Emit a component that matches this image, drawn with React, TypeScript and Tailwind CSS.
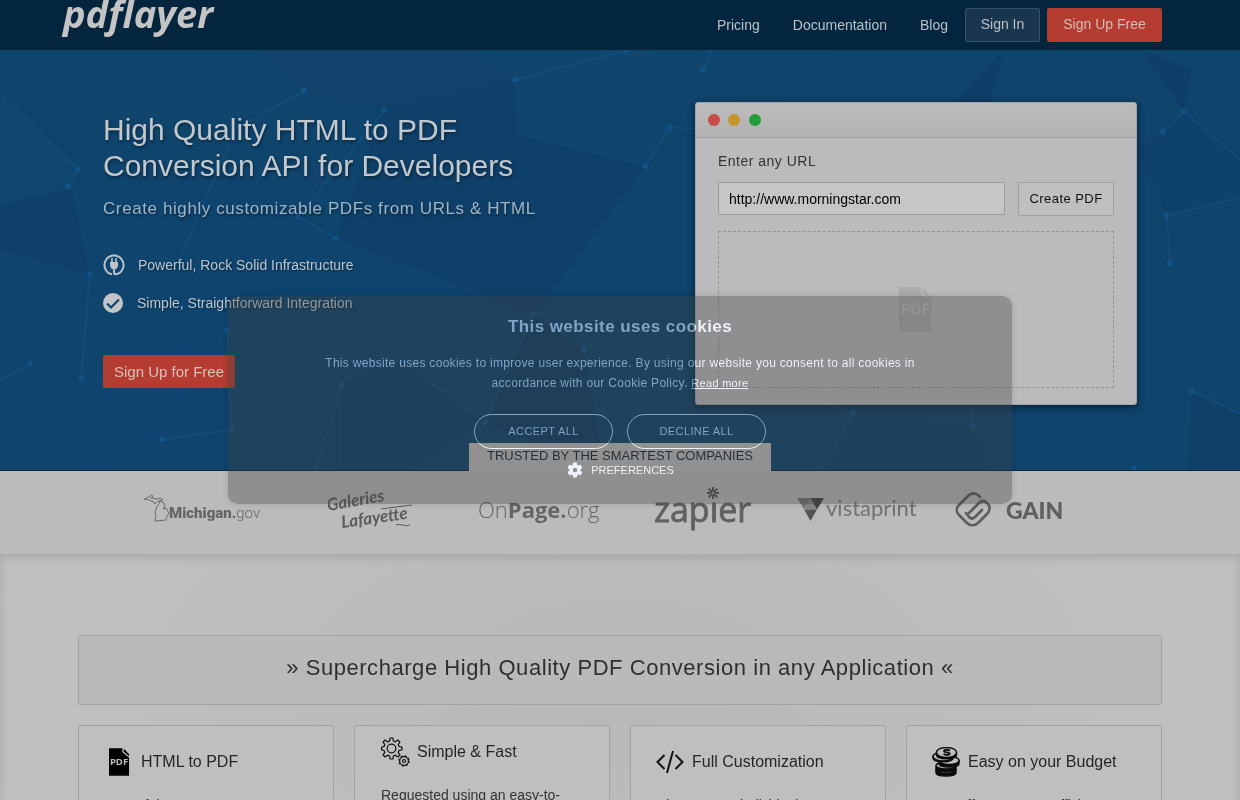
import React from "react";

const facets = [
  { points: "0,0 260,0 230,100 0,44", fill: "#11486f" },
  { points: "0,44 78,120 68,137 0,156", fill: "#114a74" },
  { points: "0,156 72,140 90,225 0,200", fill: "#0f3f68" },
  { points: "90,225 72,140 240,120 336,189 227,281", fill: "#0e4570" },
  { points: "260,0 460,0 515,30 384,61 304,41", fill: "#12426a" },
  { points: "384,61 515,30 518,86 645,117 535,265 336,189", fill: "#0f3e67" },
  { points: "515,30 626,1 695,0 670,78 645,117 518,86", fill: "#11476f" },
  { points: "336,189 535,265 402,312 227,281", fill: "#0f456f" },
  { points: "0,200 90,225 81,329 0,331", fill: "#0f446f" },
  { points: "81,329 227,281 162,390 90,421 85,421", fill: "#104672" },
  { points: "0,350 34,345 36,421 0,421", fill: "#11466e" },
  { points: "342,335 402,312 485,373 400,421 342,421", fill: "#10406a" },
  { points: "533,265 584,300 605,421 485,373", fill: "#0e3d66" },
  { points: "720,0 830,0 790,52 740,60", fill: "#12476d" },
  { points: "1005,0 990,52 955,52", fill: "#0e3c66" },
  { points: "1140,0 1192,20 1184,62", fill: "#0e3d66" },
  { points: "1184,62 1240,100 1240,148 1167,166 1137,100", fill: "#0f416a" },
  { points: "1167,166 1240,148 1240,240 1192,342 1170,214", fill: "#0f456f" },
  { points: "1192,342 1240,364 1240,421 1187,421", fill: "#123f66" },
  { points: "853,363 973,377 990,421 830,421", fill: "#10416b" },
];

const links = [
  "0,44 78,120 68,137",
  "304,41 235,80 180,210",
  "384,61 298,167 336,189",
  "90,225 81,329",
  "0,331 30,314",
  "227,281 232,380 162,390",
  "342,335 315,421",
  "515,30 626,1",
  "712,0 703,20",
  "695,79 670,78 645,117",
  "533,265 485,373 402,312",
  "605,362 584,300",
  "1163,82 1184,62 1240,110",
  "1240,148 1167,166 1170,214",
  "1192,342 1240,364",
  "820,421 853,363 830,355",
  "973,377 971,355",
];

const nodes = [
  [78, 120], [68, 137], [304, 41], [384, 61], [298, 167], [336, 189], [90, 225], [81, 329],
  [30, 314], [227, 281], [232, 380], [162, 390], [342, 335], [515, 30], [626, 1], [703, 20],
  [670, 78], [645, 117], [533, 265], [485, 373], [402, 312], [584, 300], [1163, 82], [1184, 62],
  [1167, 166], [1170, 214], [1192, 342], [853, 363], [973, 377], [1134, 419],
];

const HeroBackground = () => (
  <svg
    className="absolute inset-0 h-full w-full"
    viewBox="0 0 1240 421"
    preserveAspectRatio="xMidYMid slice"
    aria-hidden="true"
  >
    <g opacity="0.6">
      {facets.map((f) => (
        <polygon key={f.points} points={f.points} fill={f.fill} />
      ))}
    </g>
    <g opacity="0.8">
      {links.map((l) => (
        <polyline key={l} points={l} fill="none" stroke="#17517f" strokeWidth="1.5" />
      ))}
      {nodes.map(([x, y]) => (
        <circle key={`${x}-${y}`} cx={x} cy={y} r="3" fill="#15568b" />
      ))}
    </g>
  </svg>
);

const PdfIcon = ({ className }: { className: string }) => (
  <svg viewBox="0 0 22 29" className={className} aria-hidden="true">
    <path d="M0 0h14v4l7 6v19H0z" fill="currentColor" />
    <path d="M16 1l5 5.500v2L15 3z" fill="currentColor" />
    <text
      x="10.500"
      y="18"
      textAnchor="middle"
      fontFamily="Open Sans, sans-serif"
      fontWeight="700"
      fontSize="10"
      fill="#bebebe"
    >
      PDF
    </text>
  </svg>
);

const GearsIcon = () => (
  <svg viewBox="0 0 29 30" className="h-[30px] w-[29px]" fill="none" stroke="#111" strokeWidth="1.200" aria-hidden="true">
    <path d="M9.200 1h2.600l.7 3 1.900.8 2.600-1.700 1.900 1.900-1.700 2.600.8 1.900 3 .7v2.600l-3 .7-.8 1.900 1.700 2.600-1.900 1.900-2.600-1.700-1.900.8-.7 3H9.200l-.7-3-1.900-.8L4 19.900 2.100 18l1.700-2.600L3 13.500l-2.400-.7v-2.600L3 9.500l.8-1.900L2.100 5 4 3.100l2.600 1.700L8.500 4z" />
    <circle cx="10.500" cy="11.500" r="4.300" />
    <circle cx="23" cy="24" r="4.400" />
    <circle cx="23" cy="24" r="5.100" strokeDasharray="2 2.005" />
    <circle cx="23" cy="24" r="1.500" />
  </svg>
);

const CodeIcon = () => (
  <svg viewBox="0 0 28 24" className="h-6 w-7" fill="none" stroke="#111" strokeWidth="2" aria-hidden="true">
    <path d="M8.500 5L1.500 12l7 7M19.500 5l7 7-7 7M17 1l-6 22" />
  </svg>
);

const CoinsIcon = () => (
  <svg viewBox="0 0 28 30" className="h-[30px] w-7" fill="#bebebe" stroke="#0c0c0c" strokeWidth="1.400" aria-hidden="true">
    <path d="M4 23v3c0 4 20 4 20 0v-3" fill="#0c0c0c" />
    <ellipse cx="14" cy="23" rx="10" ry="3.500" />
    <path d="M4 19v3c0 4 20 4 20 0v-3" fill="#0c0c0c" />
    <ellipse cx="14" cy="18.500" rx="10" ry="3.500" />
    <path d="M7 14v3c0 4 20 4 20 0v-4" fill="#0c0c0c" />
    <ellipse cx="17" cy="13.500" rx="10" ry="4" />
    <path d="M1 9v2c0 5 20 5 20 0V9" fill="#0c0c0c" />
    <ellipse cx="11" cy="9.500" rx="10" ry="4.500" />
    <path d="M4.500 5v3c0 5 20 5 20 0V5" fill="#0c0c0c" />
    <ellipse cx="14.500" cy="5.500" rx="10" ry="5" />
    <path d="M18 3.500c-3-1.500-6.500-.5-6 .8.400 1.300 5.500.7 5.700 2.200.1 1.300-3.500 2-6.200.5" fill="none" strokeWidth="1.800" />
  </svg>
);

const PlugIcon = () => (
  <svg viewBox="0 0 22 22" className="h-[22px] w-[22px]" fill="none" stroke="#bcc3c9" strokeWidth="2" aria-hidden="true">
    <path d="M9 20.300A9.500 9.500 0 1 1 13 20.300c-2 .3-2-1-2-5" />
    <path d="M7 8h8v3c0 3-2 4.500-4 4.500S7 14 7 11z" fill="#bcc3c9" stroke="none" />
    <path d="M9 4v4M13 4v4" strokeWidth="1.600" />
  </svg>
);

const CheckIcon = () => (
  <svg viewBox="0 0 20 20" className="h-5 w-5" aria-hidden="true">
    <circle cx="10" cy="10" r="10" fill="#c3c6c8" />
    <path d="M4 10.500l4 4 8-8" fill="none" stroke="#0f446f" strokeWidth="2.200" />
  </svg>
);

const MichiganLogo = () => (
  <svg viewBox="0 0 118 30" className="h-[30px] w-[118px]" role="img" aria-label="Michigan.gov">
    <path
      d="M1 5l5-2 3-2 1 2-2 1 6 1 4-1 2 2-5 1-3 3-1-2-5-2zM12 27l1-4-1-5 2-6 2-2 1-3 4 2 1 3-2 3 3-1 3 5-2 3-1 4z"
      fill="none"
      stroke="#6c6c6c"
    />
    <text x="26" y="24" fontFamily="Roboto, sans-serif" fontSize="15" fill="#666">
      <tspan fontWeight="900">Michigan.</tspan>
      <tspan fontWeight="300">gov</tspan>
    </text>
  </svg>
);

const GaleriesLogo = () => (
  <svg viewBox="0 0 84 46" className="h-[46px] w-[84px]" role="img" aria-label="Galeries Lafayette" fill="#5c5c5c">
    <g fontFamily="Lato, sans-serif" fontStyle="italic" fontWeight="700">
      <text x="0" y="25" fontSize="17" transform="rotate(-10 0 25)">Galeries</text>
      <text x="14" y="42" fontSize="17" transform="rotate(-8 14 42)">Lafayette</text>
    </g>
    <path d="M53 23l31-4M68 39c6-2 6 2 14 0" fill="none" stroke="#5c5c5c" />
  </svg>
);

const OnPageLogo = () => (
  <svg viewBox="0 0 124 30" className="h-[30px] w-[124px]" role="img" aria-label="OnPage.org">
    <text x="0" y="21" fontFamily="Open Sans, sans-serif" fontSize="22" fill="#666">
      <tspan fontWeight="300">On</tspan>
      <tspan fontWeight="700">Page.</tspan>
      <tspan fontWeight="300">org</tspan>
    </text>
  </svg>
);

const ZapierLogo = () => (
  <svg viewBox="0 0 98 46" className="h-[46px] w-[98px]" role="img" aria-label="zapier">
    <text
      x="0"
      y="36"
      fontFamily="Open Sans, sans-serif"
      fontSize="34"
      fill="#606060"
      stroke="#606060"
      strokeWidth="0.800"
    >
      zapıer
    </text>
    <path
      d="M59 1v12M53 7h12M54.700 2.700l8.600 8.600M63.300 2.700l-8.600 8.600"
      stroke="#555"
      strokeWidth="2"
    />
    <circle cx="59" cy="7" r="1.600" fill="#949494" />
  </svg>
);

const VistaprintLogo = () => (
  <svg viewBox="0 0 122 28" className="h-7 w-[122px]" role="img" aria-label="vistaprint">
    <path d="M1 2h14L8 13z" fill="#747474" />
    <path d="M14.500 2L21 13.500H8z" fill="#858585" />
    <path d="M14.500 2H28l-7 11.500z" fill="#444" />
    <path d="M8 13.500h13L14.500 25z" fill="#555" />
    <text x="30" y="20" fontFamily="Lato, sans-serif" fontSize="22" fill="#717171">
      vistaprint
    </text>
  </svg>
);

const GainLogo = () => (
  <svg viewBox="0 0 112 36" className="h-9 w-28" role="img" aria-label="GAIN">
    <g fill="none" stroke="#5d5d5d" strokeWidth="2.600" strokeLinecap="round">
      <path d="M25 5l-2-2c-3-2-7-2-10 1L4 13c-3 3-3 7 0 10l8 8c3 3 8 3 11 0l9-9c3-3 4-8 0-11-3-3-6-2-8 0L14 21" />
      <path d="M11 21l3 4c2 2 4 2 6 0l7-7" />
    </g>
    <text x="51" y="27" fontFamily="Lato, sans-serif" fontWeight="900" fontSize="23" fill="#5f5f5f">
      GAIN
    </text>
  </svg>
);

const Header = () => (
  <header className="bg-[#03263e]">
    <div className="mx-auto flex h-[50px] max-w-[1084px] items-start justify-between">
      <a
        href="#"
        className="-mt-3 -ml-[15px] font-['Open_Sans',sans-serif] text-[38px] leading-[50px] font-bold text-[#c4c4c4] italic"
      >
        pdflayer
      </a>
      <nav className="flex items-center pt-2 text-sm text-[#bac2c8]">
        <a href="#" className="mr-[33px] pb-px">Pricing</a>
        <a href="#" className="mr-[33px] pb-px">Documentation</a>
        <a href="#" className="mr-[17px]">Blog</a>
        <button className="mr-[7px] h-[34px] w-[75px] rounded-[2px] border border-[#34526a] bg-[#1a364e] pb-[2px]">
          Sign In
        </button>
        <button className="h-[34px] w-[115px] rounded-[2px] bg-[#b43c30] pb-[2px] text-[#d6bcb8]">Sign Up Free</button>
      </nav>
    </div>
  </header>
);

const Hero = () => (
  <section className="relative border-b border-[#0b263d] bg-[#0f446d]">
    <HeroBackground />
    <div className="relative mx-auto flex max-w-[1034px] items-start justify-between pt-[52px] pb-[65px]">
      <div className="pt-[10px] text-[#bcc6ce]">
        <h1 className="text-[30px] leading-9 text-[#c3c8cc] [text-shadow:1px_2px_3px_rgba(0,0,0,0.4)]">
          High Quality HTML to PDF
          <br />
          Conversion API for Developers
        </h1>
        <p className="mt-[13px] text-[17px] leading-6 tracking-[0.035em] text-[#9fb4c4] [text-shadow:1px_2px_3px_rgba(0,0,0,0.4)]">
          Create highly customizable PDFs from URLs &amp; HTML
        </p>
        <ul className="mt-[33px] text-sm [text-shadow:1px_1px_2px_rgba(0,0,0,0.4)]">
          <li className="flex h-[22px] items-center gap-[13px]">
            <PlugIcon />
            Powerful, Rock Solid Infrastructure
          </li>
          <li className="mt-4 flex h-[22px] items-center gap-[14px]">
            <CheckIcon />
            Simple, Straightforward Integration
          </li>
        </ul>
        <button className="mt-[41px] h-[33px] rounded-[2px] bg-[#b43c30] px-[11px] pt-px text-[15px] text-[#d8c0bc]">
          Sign Up for Free
        </button>
      </div>

      <div className="h-[303px] w-[442px] rounded-[3px] border border-[#a4a4a8] bg-[#bbbbbe] shadow-[0_2px_8px_rgba(0,0,0,0.5)]">
        <div className="flex h-[35px] items-center gap-2 rounded-t-[3px] border-b border-[#a2a2a2] bg-linear-to-b from-[#bcbcbc] to-[#b2b2b2] px-3">
          <span className="h-3 w-3 rounded-full bg-[#c94b47]" />
          <span className="h-3 w-3 rounded-full bg-[#c79427]" />
          <span className="ml-px h-3 w-3 rounded-full bg-[#219c37]" />
        </div>
        <form className="px-[22px] pt-[13px]" onSubmit={(e) => e.preventDefault()}>
          <label htmlFor="url" className="block text-sm leading-5 tracking-[0.035em] text-[#333]">
            Enter any URL
          </label>
          <div className="mt-[11px] flex justify-between">
            <input
              id="url"
              type="text"
              defaultValue="http://www.morningstar.com"
              className="h-[33px] w-[287px] rounded-[2px] border border-[#9c9c9c] bg-[#c6c6c6] px-[10px] text-sm text-black"
            />
            <button className="h-[34px] w-24 rounded-[2px] border border-[#a0a0a0] bg-[#bfbfc1] text-[13px] tracking-[0.035em] whitespace-nowrap text-[#111]">
              Create PDF
            </button>
          </div>
          <div className="mt-[15px] flex h-[157px] items-center justify-center border border-dashed border-[#939393]">
            <PdfIcon className="h-[45px] w-[34px] text-[#acacac]" />
          </div>
        </form>
      </div>
    </div>
  </section>
);

const Companies = () => (
  <section className="relative border-b border-[#adadad] bg-[#bbbbbb]">
    <h2 className="absolute -top-7 left-1/2 h-7 w-[302px] -translate-x-1/2 bg-[#bdbdbd] pt-[2px] text-center text-[13px] leading-[21px] text-[#152636]">
      TRUSTED BY THE SMARTEST COMPANIES
    </h2>
    <div className="mx-auto grid h-[83px] max-w-[1084px] grid-cols-[168fr_168fr_171fr_155fr_154fr_153fr] justify-items-center pt-[15px] pr-[75px] pl-10">
      <div className="pt-2"><MichiganLogo /></div>
      <div><GaleriesLogo /></div>
      <div className="pt-[11px]"><OnPageLogo /></div>
      <div><ZapierLogo /></div>
      <div className="pt-[10px]"><VistaprintLogo /></div>
      <div className="pt-[6px]"><GainLogo /></div>
    </div>
  </section>
);

const Features = () => (
  <section className="bg-radial-[at_50%_30%] from-[#b8b8b8] to-[#c4c4c4] pt-20 shadow-[inset_0_2px_10px_rgba(0,0,0,0.15)]">
    <div className="mx-auto max-w-[1084px]">
      <h2 className="flex h-[70px] items-center justify-center rounded-[2px] border border-[#a3a3a3] bg-[#b9b9b9] pb-[5px] text-[22px] tracking-wide text-[#2f2f2f]">
        » Supercharge High Quality PDF Conversion in any Application «
      </h2>
      <div className="mt-5 grid grid-cols-4 gap-5 text-sm text-[#333]">
        <div className="h-[300px] rounded-[3px] border border-[#a2a2a2] bg-[#bfbfbf] px-[26px] pt-[21px]">
          <h3 className="flex h-[30px] items-center gap-[11px] pl-1 text-base text-[#262626]">
            <PdfIcon className="h-7 w-[21px] text-black" />
            HTML to PDF
          </h3>
          <p className="mt-[17px] leading-[22px]">Powerful PDF</p>
        </div>
        <div className="h-[300px] rounded-[3px] border border-[#a2a2a2] bg-[#bfbfbf] px-[26px] pt-[11px]">
          <h3 className="flex h-[30px] items-center gap-[7px] text-base text-[#262626]">
            <GearsIcon />
            Simple &amp; Fast
          </h3>
          <p className="mt-[17px] leading-[22px]">Requested using an easy-to-</p>
        </div>
        <div className="h-[300px] rounded-[3px] border border-[#a2a2a2] bg-[#bfbfbf] px-[25px] pt-[21px]">
          <h3 className="flex h-[30px] items-center gap-2 text-base text-[#262626]">
            <CodeIcon />
            Full Customization
          </h3>
          <p className="mt-[17px] leading-[22px]">Change your individual</p>
        </div>
        <div className="h-[300px] rounded-[3px] border border-[#a2a2a2] bg-[#bfbfbf] px-[25px] pt-[21px]">
          <h3 className="flex h-[30px] items-center gap-2 text-base text-[#262626]">
            <CoinsIcon />
            Easy on your Budget
          </h3>
          <p className="mt-[17px] leading-[22px]">Our offers are very efficient</p>
        </div>
      </div>
    </div>
  </section>
);

const CookieDialog = () => (
  <div className="absolute inset-0 grid place-items-center">
    <div className="col-start-1 row-start-1 h-[208px] w-[784px] rounded-[10px] bg-[rgba(63,63,63,0.35)] shadow-[0_0_6px_rgba(0,0,0,0.12)]" />
    <div
      role="dialog"
      aria-labelledby="cookie-title"
      className="col-start-1 row-start-1 flex h-[208px] w-[784px] flex-col items-center pt-5 text-[#60646a] mix-blend-plus-lighter"
    >
      <h2 id="cookie-title" className="text-[17px] leading-[22px] font-bold tracking-wide">
        This website uses cookies
      </h2>
      <p className="mt-[15px] w-[640px] text-center text-xs leading-5 tracking-wide">
        This website uses cookies to improve user experience. By using our website you consent to all cookies in
        accordance with our Cookie Policy.{" "}
        <a href="#" className="text-[11px] underline">Read more</a>
      </p>
      <div className="mt-[21px] flex gap-[14px] text-[11px] tracking-[0.035em]">
        <button className="h-[35px] w-[139px] rounded-full border border-current">ACCEPT ALL</button>
        <button className="h-[35px] w-[139px] rounded-full border border-current">DECLINE ALL</button>
      </div>
      <button className="mt-3 flex items-center gap-[7px] text-[11px] leading-[18px]">
        <svg viewBox="0 0 24 24" className="h-[18px] w-[18px]" fill="currentColor" aria-hidden="true">
          <path d="M19.400 13a7.500 7.500 0 0 0 0-2l2.100-1.600c.2-.2.300-.5.100-.7l-2-3.500c-.1-.2-.4-.3-.6-.2l-2.500 1a7 7 0 0 0-1.700-1l-.4-2.600a.5.5 0 0 0-.5-.4h-4c-.2 0-.4.200-.5.400L9 5a7 7 0 0 0-1.700 1l-2.500-1c-.2-.1-.5 0-.6.200l-2 3.500c-.1.200-.1.500.1.700L4.500 11a7.500 7.500 0 0 0 0 2l-2.200 1.600c-.2.200-.2.500-.1.700l2 3.500c.1.200.4.300.6.200l2.500-1a7 7 0 0 0 1.700 1l.4 2.600c0 .2.200.4.500.4h4c.3 0 .5-.2.500-.4l.4-2.600a7 7 0 0 0 1.700-1l2.500 1c.2.100.5 0 .6-.2l2-3.500c.1-.2.100-.5-.1-.7zM12 15a3 3 0 1 1 0-6 3 3 0 0 1 0 6z" />
        </svg>
        PREFERENCES
      </button>
    </div>
  </div>
);

const App = () => {
  return (
    <div className="relative h-screen overflow-hidden bg-[#c0c0c0] font-['Liberation_Sans',Arial,sans-serif]">
      <Header />
      <Hero />
      <Companies />
      <Features />
      <CookieDialog />
    </div>
  );
};

export default App;
